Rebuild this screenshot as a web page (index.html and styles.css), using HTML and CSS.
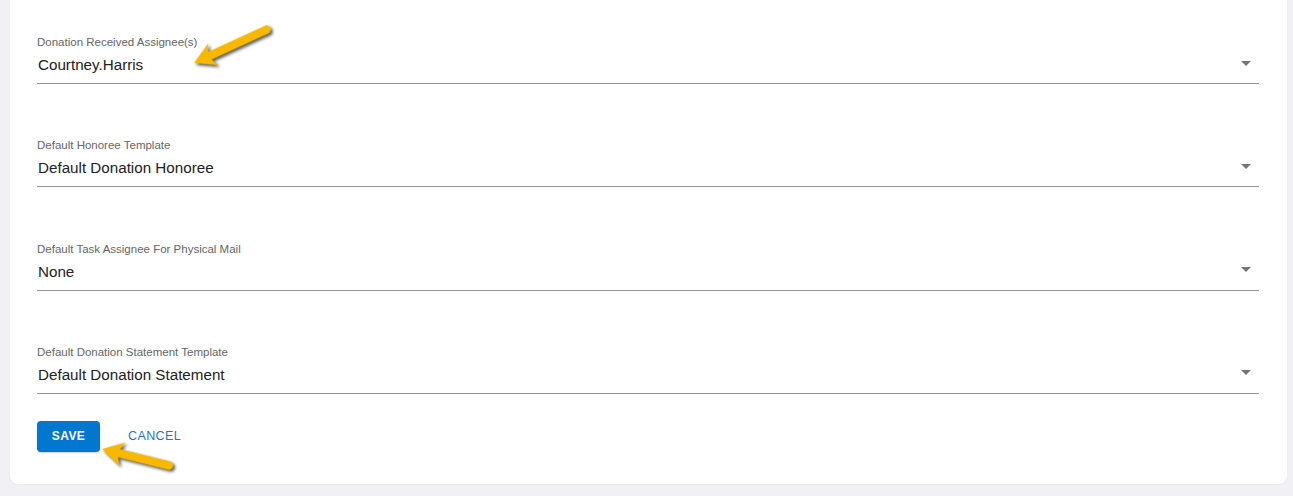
FILE: index.html
```html
<!DOCTYPE html>
<html lang="en">
<head>
<meta charset="utf-8">
<title>Donation Settings</title>
<link rel="stylesheet" href="styles.css">
</head>
<body>
<div class="page">
  <div class="card">
    <div class="fields">
      <div class="field">
        <div class="label">Donation Received Assignee(s)</div>
        <div class="select"><span class="value">Courtney.Harris</span><span class="caret"></span></div>
      </div>
      <div class="field">
        <div class="label">Default Honoree Template</div>
        <div class="select"><span class="value">Default Donation Honoree</span><span class="caret"></span></div>
      </div>
      <div class="field">
        <div class="label">Default Task Assignee For Physical Mail</div>
        <div class="select"><span class="value">None</span><span class="caret"></span></div>
      </div>
      <div class="field">
        <div class="label">Default Donation Statement Template</div>
        <div class="select"><span class="value">Default Donation Statement</span><span class="caret"></span></div>
      </div>
    </div>
    <div class="actions">
      <button class="btn btn-primary">SAVE</button>
      <button class="btn btn-text">CANCEL</button>
    </div>
  </div>
</div>
<svg class="annotations" width="1293" height="496" viewBox="0 0 1293 496" xmlns="http://www.w3.org/2000/svg">
  <g class="arrow">
    <path transform="translate(194 63) rotate(-24.7)" d="M0,0 L21,-12 L17.5,-4.2 L80,-4.2 A4.2,4.2 0 0 1 80,4.2 L17.5,4.2 L21,12 Z"/>
    <path transform="translate(102 449) rotate(13.8)" d="M0,0 L21,-12 L17.5,-4.2 L69,-4.2 A4.2,4.2 0 0 1 69,4.2 L17.5,4.2 L21,12 Z"/>
  </g>
</svg>
</body>
</html>
```

FILE: styles.css
```css
* { box-sizing: border-box; }
html, body {
  margin: 0;
  padding: 0;
}
body {
  width: 1293px;
  height: 496px;
  overflow: hidden;
  background: #f0f0f5;
  font-family: "Liberation Sans", Arial, sans-serif;
  position: relative;
}
.page {
  padding: 0 6px 12px 10px;
}
.card {
  background: #ffffff;
  border-radius: 0 0 8px 8px;
  box-shadow: 0 1px 2px rgba(0, 0, 0, 0.04);
  padding: 35px 28px 32px 27px;
}
.fields {
  display: flex;
  flex-direction: column;
  gap: 54.3px;
}
.label {
  font-size: 11.5px;
  line-height: 14px;
  color: #666666;
  white-space: nowrap;
}
.select {
  display: flex;
  align-items: center;
  justify-content: space-between;
  padding: 6px 8px 9px 1px;
  border-bottom: 1px solid #949494;
}
.value {
  font-size: 15.2px;
  line-height: 19px;
  color: #222222;
}
.caret {
  width: 0;
  height: 0;
  border-left: 5px solid transparent;
  border-right: 5px solid transparent;
  border-top: 5px solid #757575;
  margin-top: -3px;
}
.actions {
  display: flex;
  align-items: center;
  margin-top: 27px;
}
.btn {
  font-family: "Liberation Sans", Arial, sans-serif;
  font-size: 12.5px;
  letter-spacing: 0.4px;
  border: none;
  background: none;
  padding: 0;
  cursor: pointer;
}
.btn-primary {
  width: 63px;
  height: 31px;
  border-radius: 4px;
  background: #0277d0;
  color: #ffffff;
  font-size: 12px;
  font-weight: 700;
  box-shadow: 0 1px 2px rgba(0, 0, 0, 0.2);
}
.btn-text {
  color: #1976d2;
  margin-left: 28px;
  height: 31px;
}
.annotations {
  position: absolute;
  left: 0;
  top: 0;
  pointer-events: none;
}
.arrow {
  fill: #f9b800;
  filter: drop-shadow(2px 2px 1.5px rgba(0, 0, 0, 0.65));
}
```
